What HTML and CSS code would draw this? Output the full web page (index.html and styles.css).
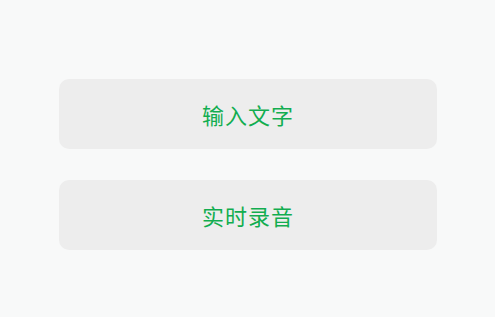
FILE: index.html
```html
<!DOCTYPE html>
<html lang="zh">
<head>
<meta charset="utf-8">
<link rel="stylesheet" href="styles.css">
</head>
<body>
<div class="page">
  <div class="actions">
    <div class="btn">输入文字</div>
    <div class="btn">实时录音</div>
  </div>
</div>
</body>
</html>
```
FILE: styles.css
```css
html, body {
  margin: 0;
  padding: 0;
  background: #f8f9f9;
}
.page {
  width: 495px;
  height: 317px;
  padding: 79px 0 0 59px;
  box-sizing: border-box;
}
.actions {
  width: 378px;
  display: flex;
  flex-direction: column;
  gap: 31px;
}
.btn {
  height: 70px;
  border-radius: 10px;
  background: #ededed;
  display: flex;
  align-items: center;
  justify-content: center;
  color: #12ad50;
  font-family: "Noto Sans CJK SC", "Noto Sans", sans-serif;
  font-size: 22px;
  font-weight: 400;
  letter-spacing: 1px;
}
```
